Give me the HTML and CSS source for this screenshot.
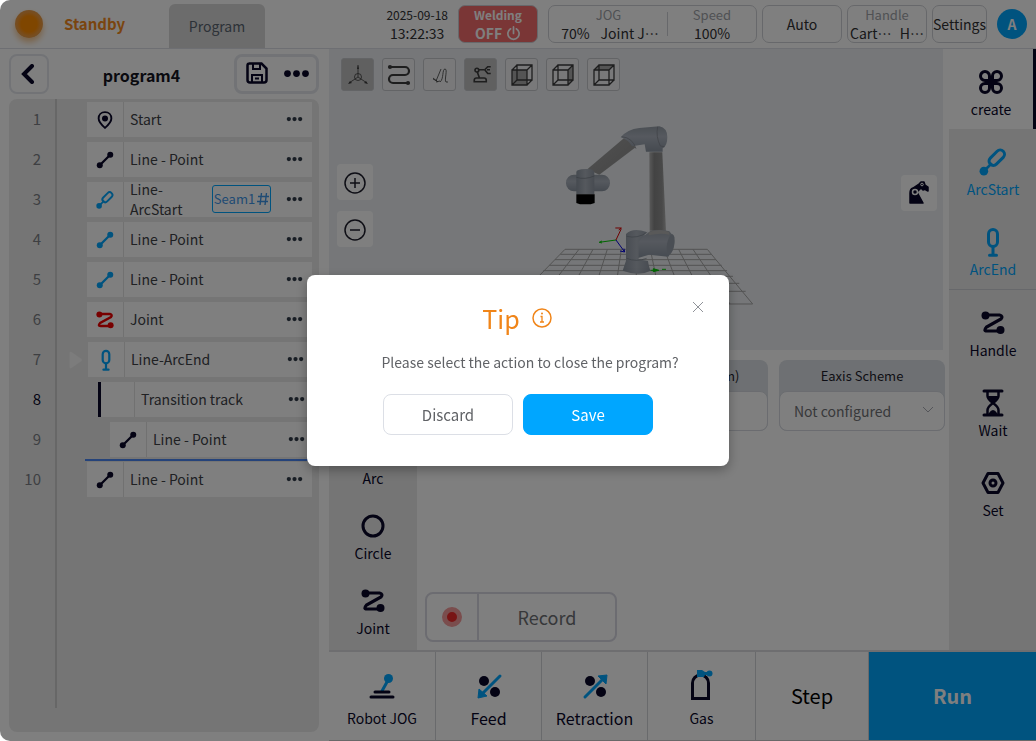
FILE: index.html
```
<!DOCTYPE html>
<html lang="en">

<head>
    <meta charset="UTF-8">
    <meta name="viewport" content="width=device-width, initial-scale=1.0">
    <title>Robot program</title>
    <link rel="stylesheet" href="styles.css">
</head>

<body>
    <!-- shared icons -->
    <svg class="sprite" aria-hidden="true">
        <symbol id="dots" viewBox="0 0 24 8">
            <circle cx="4" cy="4" r="3" /><circle cx="12" cy="4" r="3" /><circle cx="20" cy="4" r="3" />
        </symbol>
        <symbol id="line" viewBox="0 0 24 24">
            <path d="M5 19 19 5" stroke="currentColor" stroke-width="3" />
            <circle cx="5" cy="19" r="4" /><circle cx="19" cy="5" r="4" />
        </symbol>
        <symbol id="joint" viewBox="0 0 24 24">
            <path d="M4 4h14.500q4 1 1.500 4L5.500 16q-3.500 4 .5 4h14" fill="none" stroke="currentColor" stroke-width="3.200" />
            <circle cx="4.500" cy="4.500" r="4" /><circle cx="19.500" cy="19" r="4" />
        </symbol>
        <symbol id="arcstart" viewBox="0 0 26 26">
            <path d="M4 22l8-8" stroke="currentColor" stroke-width="2.500" />
            <rect x="8" y="5" width="17" height="8" rx="4" transform="rotate(-45 16.500 9)" fill="none" stroke="currentColor" stroke-width="2.800" />
            <circle cx="4.500" cy="21.500" r="4" />
        </symbol>
        <symbol id="arcend" viewBox="0 0 26 30">
            <rect x="8.500" y="2.500" width="9" height="17" rx="4.500" fill="none" stroke="currentColor" stroke-width="3" />
            <path d="M13 20v8M9.500 28.200h7" fill="none" stroke="currentColor" stroke-width="3" stroke-linecap="round" />
        </symbol>
        <symbol id="cube" viewBox="0 0 24 24">
            <path d="M2 7h15v15H2zM7 2h15v15H7zM2 7l5-5M17 7l5-5M2 22l5-5M17 22l5-5" fill="none" stroke="currentColor" stroke-width="1.300" />
        </symbol>
        <symbol id="power" viewBox="0 0 16 16">
            <path d="M5 3a6 6 0 1 0 6 0M8 1v7" fill="none" stroke="currentColor" stroke-width="1.800" stroke-linecap="round" />
        </symbol>
    </svg>

    <div class="app">
        <header class="topbar">
            <span class="orb"></span>
            <strong class="status">Standby</strong>
            <a class="tab" href="#program">Program</a>
            <div class="clock"><span class="date">2025-09-18</span><span>13:22:33</span></div>
            <button class="weld">
                <span>Welding</span>
                <span class="weld-state">OFF <svg><use href="#power" /></svg></span>
            </button>
            <div class="box jog">
                <div class="jog-mode"><small>JOG</small><p><span>70%</span><span lang="zh-CN">Joint J…</span></p></div>
                <div class="jog-speed"><small>Speed</small><p>100%</p></div>
            </div>
            <button class="box">Auto</button>
            <button class="box handle"><small>Handle</small><span class="handle-row" lang="zh-CN"><span>Cart…</span><span>H…</span></span></button>
            <button class="box settings">Settings</button>
            <button class="avatar">A</button>
        </header>

        <div class="main">
            <aside class="program" id="program">
                <div class="program-head">
                    <button class="back" aria-label="Back">
                        <svg viewBox="0 0 16 20"><path d="M11 2 3 10l8 8" fill="none" stroke="currentColor" stroke-width="4" stroke-linecap="round" /></svg>
                    </button>
                    <h1>program4</h1>
                    <div class="file-actions">
                        <button aria-label="Save program">
                            <svg class="save-icon" viewBox="0 0 22 22" fill="none" stroke="currentColor" stroke-width="2.500"><path d="M3 1.500h12.500l5 5V18a2.500 2.500 0 0 1-2.500 2.500H4A2.500 2.500 0 0 1 1.500 18V3.500q0-2 2-2z" /><path d="M7 2v5h7V2M6 20v-7h10v7M9 16.500h4" stroke-width="2" /></svg>
                        </button>
                        <button aria-label="More"><svg class="more-icon"><use href="#dots" /></svg></button>
                    </div>
                </div>

                <ol class="steps">
                    <li><span class="num">1</span>
                        <div class="step"><span class="step-icon"><svg viewBox="0 0 24 24"><path d="M12 1.500c5 0 8.500 3.500 8.500 8.500 0 5-4.500 9-8.500 12.500C8 19 3.500 15 3.500 10c0-5 3.500-8.500 8.500-8.500z" fill="none" stroke="currentColor" stroke-width="2.500" /><circle cx="12" cy="10" r="4" /></svg></span><span class="name">Start</span><button aria-label="More"><svg><use href="#dots" /></svg></button></div>
                    </li>
                    <li><span class="num">2</span>
                        <div class="step"><span class="step-icon"><svg><use href="#line" /></svg></span><span class="name">Line - Point</span><button aria-label="More"><svg><use href="#dots" /></svg></button></div>
                    </li>
                    <li><span class="num">3</span>
                        <div class="step"><span class="step-icon blue"><svg><use href="#arcstart" /></svg></span><span class="name">Line-ArcStart</span>
                            <a class="seam" href="#seam1">Seam1<svg viewBox="0 0 12 14"><path d="M4.500 1 3 13M9.500 1 8 13M1 4.500h11M0 9.500h11" fill="none" stroke="currentColor" stroke-width="1.400" /></svg></a>
                            <button aria-label="More"><svg><use href="#dots" /></svg></button></div>
                    </li>
                    <li><span class="num">4</span>
                        <div class="step"><span class="step-icon blue"><svg><use href="#line" /></svg></span><span class="name">Line - Point</span><button aria-label="More"><svg><use href="#dots" /></svg></button></div>
                    </li>
                    <li><span class="num">5</span>
                        <div class="step"><span class="step-icon blue"><svg><use href="#line" /></svg></span><span class="name">Line - Point</span><button aria-label="More"><svg><use href="#dots" /></svg></button></div>
                    </li>
                    <li><span class="num">6</span>
                        <div class="step"><span class="step-icon red"><svg><use href="#joint" /></svg></span><span class="name">Joint</span><button aria-label="More"><svg><use href="#dots" /></svg></button></div>
                    </li>
                    <li class="current"><span class="num">7</span><svg class="pointer" viewBox="0 0 14 18"><path d="M1 2q0-2 2-1l10 7q1 1 0 2L3 17q-2 1-2-1z" /></svg>
                        <div class="step"><span class="step-icon blue tall"><svg><use href="#arcend" /></svg></span><span class="name">Line-ArcEnd</span><button aria-label="More"><svg><use href="#dots" /></svg></button></div>
                    </li>
                    <li class="group"><span class="num">8</span>
                        <div class="step"><span class="step-icon"></span><span class="name">Transition track</span><button aria-label="More"><svg><use href="#dots" /></svg></button></div>
                    </li>
                    <li class="child"><span class="num">9</span>
                        <div class="step"><span class="step-icon"><svg><use href="#line" /></svg></span><span class="name">Line - Point</span><button aria-label="More"><svg><use href="#dots" /></svg></button></div>
                    </li>
                    <li class="insert"><span class="num">10</span>
                        <div class="step"><span class="step-icon"><svg><use href="#line" /></svg></span><span class="name">Line - Point</span><button aria-label="More"><svg><use href="#dots" /></svg></button></div>
                    </li>
                </ol>
            </aside>

            <div class="work">
                <div class="upper">
                    <div class="center">
                        <section class="scene">
                            <svg class="robot" viewBox="0 0 614 300" preserveAspectRatio="xMidYMid slice">
                                <defs>
                                    <linearGradient id="tube" x1="0" x2="1" y1="0" y2="0"><stop offset="0" stop-color="#b4b4b4" /><stop offset=".3" stop-color="#868686" /><stop offset=".75" stop-color="#929292" /><stop offset="1" stop-color="#b4b4b4" /></linearGradient>
                                    <linearGradient id="arm" x1="0" x2="1" y1="0" y2="1"><stop offset="0" stop-color="#a4a4a4" /><stop offset=".6" stop-color="#949494" /><stop offset="1" stop-color="#a8a8a8" /></linearGradient>
                                    <linearGradient id="cap" x1="0" x2="0" y1="0" y2="1"><stop offset="0" stop-color="#959da8" /><stop offset=".4" stop-color="#acb3be" /><stop offset="1" stop-color="#8b94a1" /></linearGradient>
                                    <linearGradient id="body" x1="0" x2="1" y1="0" y2="0"><stop offset="0" stop-color="#8b94a0" /><stop offset=".5" stop-color="#abb2bc" /><stop offset="1" stop-color="#8f97a3" /></linearGradient>
                                </defs>
                                <g transform="translate(201 60) scale(.3333)">
                                    <path d="M105 418h427M91 433h453M75 449h483M58 466h517M40 482h551M20 499h589M0 520h628M-25 544h672M-55 582h723M105 418-55 582M147 418 20 582M189 418 100 582M232 418 180 582M274 418 250 582M318 418 320 582M361 418 395 582M403 418 465 582M446 418 530 582M489 418 600 582M532 418 668 582" fill="none" stroke="#a6a6a6" stroke-width="3" />
                                    <path d="M172 178 285 82l32 30L208 194z" fill="url(#arm)" />
                                    <path d="M272 82q20-24 56-28l60-5q24 5 24 32t-14 34v10h-50l-4-22-38 6q-8-18-34-27z" fill="url(#cap)" />
                                    <path d="M275 80q33 3 43 36M383 50q-6 30 8 58l12 2" fill="none" stroke="#7b8089" stroke-width="2" />
                                    <path d="M358 127h39l11 235h-49z" fill="url(#tube)" />
                                    <rect x="108" y="194" width="132" height="50" rx="24" fill="url(#cap)" />
                                    <path d="M139 186q0-8 27-9t27 10v66h-54z" fill="url(#body)" />
                                    <path d="M139 202q26 8 54-4" fill="none" stroke="#707781" stroke-width="2" />
                                    <path d="M139 253h55v26l-12 4h-32l-11-4z" fill="#000" />
                                    <path d="M322 378q20 4 38-14 27-8 58 0l10 12q10 24-1 46l-12 18-58-6-40 12z" fill="url(#cap)" />
                                    <path d="M356 367q30-14 62-1v8q-28-6-62 2z" fill="#b2b2b2" />
                                    <ellipse cx="422" cy="403" rx="11" ry="31" fill="#959da8" transform="rotate(10 422 403)" />
                                    <path d="M288 372q20-20 62-6l-24 30v52l28 5q3 20 8 29-35 18-84 0l10-30z" fill="url(#body)" />
                                    <path d="M290 445q28 12 60 0M290 379q32 8 62-12" fill="none" stroke="#767e89" stroke-width="2" />
                                    <path d="m258 390-50 7m8-4-8 4 8 2" fill="none" stroke="#0c0" stroke-width="3" />
                                    <path d="m258 390 16-34m-18-2 18 0-8 6" fill="none" stroke="#d00" stroke-width="3" />
                                    <path d="m258 390 26 36m-14-3 14 3-2-10" fill="none" stroke="#00d" stroke-width="3" />
                                    <path d="M362 481h24m10-3h12M370 476l16 5-16 4z" fill="#0c0" stroke="#0c0" stroke-width="3" />
                                </g>
                            </svg>

                            <div class="view-tools">
                                <button class="on" aria-label="Axes"><svg viewBox="0 0 24 24" fill="none" stroke="currentColor" stroke-width=".8"><path d="M12 2v12M12 14 3 20M12 14l9 6" /><circle cx="12" cy="14" r="3.500" /><path d="m11 6 1-4 1 4zM4 18l-2 3 4-1zM20 18l2 3-4-1z" fill="currentColor" stroke="none" /></svg></button>
                                <button aria-label="Track"><svg viewBox="0 0 24 24" fill="none" stroke="currentColor" stroke-width="2.200"><path d="M3 4h15a4 4 0 0 1 0 8H6a4 4 0 0 0 0 8h15" /><circle cx="3" cy="4" r="1" /><circle cx="21" cy="20" r="1" /></svg></button>
                                <button aria-label="Path"><svg viewBox="0 0 24 24" fill="none" stroke="currentColor" stroke-width=".8"><path d="m5 15 5 4M8 18l5-12M5 16l4 2M8 19l4-1M12 19c4-3 2-13 5-13 3 0-1 11 1 13h2" /></svg></button>
                                <button class="on" aria-label="Robot"><svg viewBox="0 0 32 32" fill="none" stroke="currentColor" stroke-width="2.200"><path d="M7 25v-2q0-3 3-3h10q3 0 3 3v2zM14 20l-3-8M13 9h7M29 5h-4l-4 4 4 5h4M24 9h4" /><circle cx="10.500" cy="9.500" r="2.500" /></svg></button>
                                <button aria-label="Front view"><svg><path class="face" d="M2 7h15v15H2z" /><use href="#cube" /></svg></button>
                                <button aria-label="Side view"><svg><path class="face" d="M17 7l5-5v15l-5 5z" /><use href="#cube" /></svg></button>
                                <button aria-label="Top view"><svg><path class="face" d="M2 7l5-5h15l-5 5z" /><use href="#cube" /></svg></button>
                            </div>
                            <div class="zoom-tools">
                                <button aria-label="Zoom in"><svg viewBox="0 0 24 24"><circle cx="12" cy="12" r="10" /><path d="M7 12h10M12 7v10" /></svg></button>
                                <button aria-label="Zoom out"><svg viewBox="0 0 24 24"><circle cx="12" cy="12" r="10" /><path d="M7 12h10" /></svg></button>
                            </div>
                            <button class="pose" aria-label="Robot pose"><svg viewBox="0 0 24 26"><path d="M3 23V13q0-4 3-5l6-4 2-2h3l1 3 3 2v4l-2-1v-1l-3 1-2-2-4 4 6 11z" fill="currentColor" stroke="currentColor" stroke-width="1.500" stroke-linejoin="round" /><circle cx="8" cy="12" r="2.500" fill="currentColor" stroke="#fff" stroke-width="1.500" /><circle cx="15" cy="4.500" r="1.300" fill="currentColor" stroke="#fff" /></svg></button>
                        </section>

                        <section class="editor">
                            <nav class="moves">
                                <button class="tool"><svg><use href="#line" /></svg>Line</button>
                                <button class="tool"><svg viewBox="0 0 24 24"><path d="M4 20Q4 4 20 4" fill="none" stroke="currentColor" stroke-width="3" /><circle cx="4" cy="20" r="3" /><circle cx="20" cy="4" r="3" /></svg>Arc</button>
                                <button class="tool"><svg viewBox="0 0 24 24"><circle cx="12" cy="12" r="10" fill="none" stroke="currentColor" stroke-width="3" /></svg>Circle</button>
                                <button class="tool"><svg><use href="#joint" /></svg>Joint</button>
                            </nav>
                            <div class="settings-area">
                                <div class="fields">
                                    <div class="field"><label for="speed">Speed</label><input id="speed" type="text"></div>
                                    <div class="field"><label for="radius">Blend radius(mm)</label><input id="radius" type="text"></div>
                                    <div class="field select"><label for="eaxis">Eaxis Scheme</label>
                                        <select id="eaxis"><option>Not configured</option></select>
                                        <svg viewBox="0 0 12 8"><path d="m1 1 5 5 5-5" fill="none" stroke="currentColor" /></svg>
                                    </div>
                                </div>
                                <button class="record"><span class="record-dot"><i></i></span><span class="record-text">Record</span></button>
                            </div>
                        </section>
                    </div>

                    <nav class="sidebar">
                        <button class="tool active"><svg viewBox="0 0 24 24" fill="none" stroke="currentColor" stroke-width="3"><path d="M10.500 10.500H6A4.500 4.500 0 1 1 10.500 6zM13.500 10.500V6a4.500 4.500 0 1 1 4.500 4.500zM10.500 13.500V18A4.500 4.500 0 1 1 6 13.500zM13.500 13.500H18a4.500 4.500 0 1 1-4.500 4.500z" /></svg>create</button>
                        <button class="tool blue"><svg><use href="#arcstart" /></svg>ArcStart</button>
                        <button class="tool blue tall last"><svg><use href="#arcend" /></svg>ArcEnd</button>
                        <button class="tool"><svg><use href="#joint" /></svg>Handle</button>
                        <button class="tool wait"><svg viewBox="0 0 24 28"><path d="M3 2h18M3 26h18" stroke="currentColor" stroke-width="3" stroke-linecap="round" /><path d="M6.500 2v5q0 3 5.500 7-5.500 4-5.500 7v5M17.500 2v5q0 3-5.500 7 5.500 4 5.500 7v5" fill="none" stroke="currentColor" stroke-width="2.500" /><path d="M6 7h12l-6 7zM8 25v-1q4-6 8 0v1z" /></svg>Wait</button>
                        <button class="tool"><svg viewBox="0 0 24 24" fill="none" stroke="currentColor" stroke-width="3" stroke-linejoin="round"><path d="M7 2.500h10l5 9.500-5 9.500H7L2 12z" /><circle cx="12" cy="12" r="3" /></svg>Set</button>
                    </nav>
                </div>

                <footer class="controls">
                    <button class="tool"><svg viewBox="0 0 28 28" fill="none" stroke-linecap="round"><path d="m14 19 5-9" stroke="#00a6ff" stroke-width="3" /><circle cx="20.500" cy="6.500" r="4.500" fill="#00a6ff" /><path d="M7 20h14M3 25h22" stroke="currentColor" stroke-width="3" /></svg>Robot JOG</button>
                    <button class="tool big"><svg viewBox="0 0 28 28"><circle cx="9" cy="9" r="5" /><circle cx="20" cy="20" r="5" /><path d="M25 4 7 22" stroke="#00a6ff" stroke-width="3" stroke-linecap="round" /><path d="m4 17 8 7-9 2z" fill="#00a6ff" stroke="#00a6ff" /></svg>Feed</button>
                    <button class="tool big"><svg viewBox="0 0 28 28"><circle cx="9" cy="9" r="5" /><circle cx="20" cy="20" r="5" /><path d="M4 25 22 7" stroke="#00a6ff" stroke-width="3" stroke-linecap="round" /><path d="m17 4 9-1-1 9z" fill="#00a6ff" stroke="#00a6ff" /></svg>Retraction</button>
                    <button class="tool gas"><svg viewBox="0 0 28 32"><path d="M4.500 30.500V15a8 8 0 0 1 16 0v15.500z" fill="none" stroke="currentColor" stroke-width="3" /><path d="M9 2h5l3 2h4v3h-4l-1 2H9z" fill="#00a6ff" /><circle cx="21.500" cy="5.500" r="3" fill="#00a6ff" /></svg>Gas</button>
                    <button class="step-btn">Step</button>
                    <button class="run">Run</button>
                </footer>
            </div>
        </div>
    </div>

    <div class="overlay">
        <div class="dialog" role="dialog" aria-labelledby="dialog-title">
            <button class="close" aria-label="Close"><svg viewBox="0 0 12 12"><path d="m1 1 10 10M11 1 1 11" stroke="currentColor" /></svg></button>
            <h2 id="dialog-title">Tip <svg viewBox="0 0 20 20"><circle cx="10" cy="10" r="9" fill="none" stroke="currentColor" stroke-width="1.500" /><path d="M8.500 8.500H10V14M8 14h4" fill="none" stroke="currentColor" stroke-width="1.300" /><circle cx="10" cy="5.500" r="1" fill="currentColor" /></svg></h2>
            <p>Please select the action to close the program?</p>
            <div class="dialog-actions">
                <button>Discard</button>
                <button class="primary">Save</button>
            </div>
        </div>
    </div>
</body>

</html>
```
FILE: styles.css
```
* {
    box-sizing: border-box;
}

body {
    margin: 0;
    font-family: "Noto Sans CJK SC", "Noto Sans", sans-serif;
    font-size: 14px;
    line-height: 20px;
    color: #303133;
}

button,
input,
select {
    font: inherit;
    color: inherit;
    margin: 0;
    padding: 0;
    border: 0;
    background: none;
}

a {
    text-decoration: none;
}

p,
h1,
h2 {
    margin: 0;
}

small {
    display: block;
    font-size: 13px;
    line-height: 18px;
    color: #a0a3a8;
}

svg {
    display: block;
}

svg:not([fill]) {
    fill: currentColor;
}

.sprite {
    position: absolute;
    width: 0;
    height: 0;
}

.blue {
    color: #00a6ff;
}

.red {
    color: #f00000;
}

.app {
    display: flex;
    flex-direction: column;
    min-height: 100vh;
    background: #fff;
}

/* top bar */
.topbar {
    display: flex;
    align-items: center;
    height: 49px;
    padding: 0 9px 0 15px;
    border-bottom: 1px solid #dcdfe6;
}

.orb {
    width: 28px;
    height: 28px;
    border-radius: 50%;
    background: radial-gradient(circle, #ff8c00 40%, #f09a3c 60%, #d8a468);
    box-shadow: 0 4px 6px #f5c48c;
}

.status {
    width: 61px;
    margin-left: 21px;
    padding-bottom: 0;
    font-size: 15px;
    color: #f58a1e;
}

.tab {
    align-self: flex-end;
    width: 96px;
    height: 44px;
    margin-left: 44px;
    border-radius: 6px 6px 0 0;
    background: #d8d8d8;
    color: #5a6570;
    line-height: 44px;
    text-align: center;
}

.clock {
    display: flex;
    flex-direction: column;
    margin-left: auto;
    margin-right: 10px;
    text-align: center;
    line-height: 18px;
}

.date {
    font-size: 12px;
}

.box,
.weld {
    width: 80px;
    height: 38px;
    margin-right: 5px;
    border: 1px solid #cfd1d6;
    border-radius: 7px;
    white-space: nowrap;
}

.weld {
    margin-right: 10px;
    background: #f56c6c;
    color: #fff;
    font-size: 12px;
    font-weight: bold;
    line-height: 18px;
}

.weld-state {
    display: flex;
    align-items: center;
    justify-content: center;
    gap: 4px;
    font-size: 14px;
}

.weld-state svg {
    width: 15px;
    height: 15px;
}

.jog {
    display: flex;
    align-items: center;
    width: 209px;
    text-align: center;
    line-height: 18px;
}

.jog-mode {
    width: 119px;
    background: linear-gradient(#cfd1d6, #cfd1d6) right center / 1px 24px no-repeat;
}

.jog-mode p {
    display: flex;
    justify-content: center;
    gap: 11px;
    padding-left: 3px;
}

.jog-speed {
    flex: 1;
}

.handle {
    line-height: 18px;
}

.handle-row {
    display: flex;
    justify-content: space-between;
    padding: 0 2px;
}

.settings {
    display: flex;
    align-items: center;
    justify-content: center;
    width: 55px;
    margin-right: 10px;
}

.avatar {
    width: 30px;
    height: 30px;
    border-radius: 50%;
    background: #00a6ff;
    color: #fff;
    font-size: 14px;
    font-weight: bold;
}

.main {
    display: flex;
    flex: 1;
}

/* program list */
.program {
    display: flex;
    flex-direction: column;
    width: 329px;
    flex-shrink: 0;
    padding: 5px 10px 9px 9px;
}

.program-head {
    display: flex;
    align-items: center;
    justify-content: space-between;
    margin-bottom: 5px;
    color: #080628;
}

.program-head h1 {
    flex: 1;
    padding-top: 2px;
    font-size: 16px;
    text-align: center;
    color: #15151f;
}

.back {
    display: grid;
    place-items: center;
    width: 40px;
    height: 40px;
    border: 2px solid #e4e7ed;
    border-radius: 8px;
}

.back svg {
    width: 16px;
    height: 20px;
}

.file-actions {
    display: flex;
    align-items: center;
    justify-content: center;
    gap: 15px;
    width: 85px;
    height: 40px;
    padding: 0 0 2px 2px;
    border: 3px solid #e4e7ed;
    border-radius: 8px;
}

.save-icon {
    width: 22px;
    height: 22px;
}

.more-icon {
    width: 27px;
    height: 9px;
}

.steps {
    position: relative;
    flex: 1;
    margin: 0;
    padding: 3px 7px 0 0;
    border-radius: 8px;
    background: #ebebeb;
    list-style: none;
}

.steps::before {
    content: "";
    position: absolute;
    left: 46px;
    top: 0;
    bottom: 24px;
    width: 2px;
    background: #cfcfcf;
}

.steps li {
    position: relative;
    display: flex;
    align-items: center;
    margin-bottom: 5px;
}

.num {
    width: 32px;
    margin-right: 46px;
    padding-bottom: 1px;
    text-align: right;
    font-size: 15px;
    color: #7c7f85;
}

.step {
    display: flex;
    align-items: center;
    flex: 1;
    height: 35px;
    padding-bottom: 1px;
    background: #fff;
}

.step-icon {
    display: grid;
    place-items: center;
    align-self: flex-start;
    width: 37px;
    height: 35px;
    border-right: 1px solid #e2e2e2;
}

.step-icon:not(.blue):not(.red) {
    color: #080628;
}

.step-icon svg {
    width: 18px;
    height: 18px;
}

.step-icon.tall svg {
    width: 20px;
    height: 22px;
}

.name {
    flex: 1;
    padding-left: 6px;
    color: #404247;
}

.step button {
    width: 36px;
    color: #303a48;
}

.step button svg {
    width: 17px;
    height: 6px;
    margin: 0 auto;
}

.seam {
    display: flex;
    align-items: center;
    justify-content: center;
    gap: 2px;
    width: 59px;
    height: 28px;
    margin-right: 5px;
    border: 1px solid #00a6ff;
    border-radius: 3px;
    color: #3f96e8;
    font-size: 13px;
}

.seam svg {
    width: 12px;
    height: 14px;
}

.pointer {
    position: absolute;
    left: 59px;
    width: 15px;
    height: 18px;
    color: #f8f8f8;
}

.current .num {
    margin-right: 47px;
}

.group .num {
    margin-right: 57px;
    color: #080628;
}

.group .step-icon {
    border-left: 3px solid #080628;
}

.child .num {
    margin-right: 69px;
}

.current .step {
    margin-right: -1px;
}

.group .step,
.child .step {
    margin-right: -2px;
}

/* drop position of the dragged step */
.insert::before {
    content: "";
    position: absolute;
    left: 76px;
    right: 0;
    top: -3px;
    height: 2px;
    background: #4a86f5;
}

/* work area */
.work {
    display: flex;
    flex-direction: column;
    flex: 1;
    min-width: 0;
}

.upper {
    display: flex;
    flex: 1;
}

.center {
    display: flex;
    flex-direction: column;
    flex: 1;
    min-width: 0;
}

.scene {
    position: relative;
    height: 301px;
    margin-right: 6px;
    padding: 9px 8px 0;
    background: #eceff2;
}

.robot {
    position: absolute;
    left: 0;
    top: 1px;
    width: 100%;
    height: 300px;
}

.view-tools {
    position: relative;
    display: flex;
    gap: 8px;
    margin-left: 4px;
}

.view-tools button {
    display: grid;
    place-items: center;
    width: 33px;
    height: 33px;
    border: 1px solid #c6c8cc;
    border-radius: 3px;
    background: #f2f3f5;
    color: #3c3c3c;
}

.view-tools .on {
    background: #c0c0c0;
}

.view-tools svg {
    width: 24px;
    height: 24px;
}

.face {
    fill: #a8a8a8;
}

.zoom-tools {
    position: relative;
    display: flex;
    flex-direction: column;
    gap: 11px;
    width: 36px;
    margin-top: 73px;
}

.zoom-tools button,
.pose {
    display: grid;
    place-items: center;
    width: 36px;
    height: 36px;
    border-radius: 4px;
    background: #fff;
    color: #1d1d2b;
}

.zoom-tools button {
    padding-top: 1px;
}

.zoom-tools svg {
    width: 24px;
    height: 24px;
    stroke: currentColor;
    stroke-width: 1.5;
}

.zoom-tools circle {
    fill: none;
}

.pose {
    position: absolute;
    right: 6px;
    top: 126px;
    color: #080628;
}

.pose svg {
    width: 24px;
    height: 26px;
}

.editor {
    display: flex;
    flex: 1;
}

.tool {
    display: flex;
    flex-direction: column;
    align-items: center;
    color: #080628;
}

.tool.blue {
    color: #00a6ff;
}

.tool svg {
    width: 24px;
    height: 24px;
}

.moves {
    width: 88px;
    background: #ebebeb;
}

.moves .tool {
    width: 100%;
    height: 75px;
    padding-top: 14px;
    gap: 5px;
}

.settings-area {
    display: flex;
    flex-direction: column;
    justify-content: space-between;
    align-items: flex-start;
    flex: 1;
    padding: 10px 4px 8px 8px;
}

.fields {
    display: flex;
    gap: 11px;
    width: 100%;
}

.field {
    position: relative;
    flex: 1;
    min-width: 0;
    border-radius: 8px;
    background: #dce1e6;
}

.field label {
    display: block;
    font-size: 13px;
    line-height: 31px;
    text-align: center;
    color: #1d1d2b;
}

.field input,
.field select {
    display: block;
    width: 100%;
    height: 40px;
    padding: 0 14px;
    border: 1px solid #d6d9e0;
    border-radius: 8px;
    background: #fff;
    color: #707276;
    appearance: none;
}

.field svg {
    position: absolute;
    right: 11px;
    bottom: 17px;
    width: 12px;
    height: 8px;
    color: #a8abb2;
}

.record {
    display: flex;
    width: 192px;
    height: 50px;
    border: 2px solid #d8d8e2;
    border-radius: 8px;
    font-size: 18px;
    line-height: 46px;
    color: #6e7074;
}

.record-dot {
    display: grid;
    place-items: center;
    width: 52px;
    height: 46px;
    border-right: 2px solid #d8d8e2;
}

.record-dot i {
    width: 20px;
    height: 20px;
    border: 5px solid #f59a9a;
    border-radius: 50%;
    background: #f02828;
}

.record-text {
    flex: 1;
}

/* right side */
.sidebar {
    width: 87px;
    background: #ebebeb;
}

.sidebar .tool {
    width: 100%;
    height: 80px;
    padding-top: 21px;
    padding-left: 1px;
    gap: 5px;
}

.sidebar .tool.active {
    padding-left: 0;
    border-right: 3px solid #080628;
    background: #fff;
}

.sidebar .blue svg {
    width: 28px;
    height: 28px;
    margin: -2px 0;
}

.sidebar .tall svg {
    height: 30px;
    margin: -3px 0;
}

.sidebar .wait svg {
    height: 28px;
    margin: -2px 0;
}

.sidebar .last {
    height: 81px;
    border-bottom: 1px solid #cfd1d6;
}

/* bottom bar */
.controls {
    display: flex;
    height: 91px;
    border-top: 2px solid #dcdde0;
    border-bottom: 1px solid #d0d0d0;
}

.controls button {
    height: 88px;
    width: 106px;
    border-right: 1px solid #d2d4d8;
}

.controls button:first-child {
    width: 107px;
}

.controls .tool {
    padding-top: 20px;
    gap: 8px;
}

.controls .tool svg {
    width: 28px;
    height: 28px;
}

.controls .big {
    font-size: 16px;
}

.controls .gas {
    width: 108px;
}

.controls .gas svg {
    height: 32px;
    margin-top: -4px;
}

.controls .step-btn {
    width: 113px;
    font-size: 20px;
    color: #000;
}

.controls .run {
    flex: 1;
    border: 0;
    background: #00a6ff;
    color: #fff;
    font-size: 20px;
    font-weight: bold;
}

/* close program dialog */
.overlay {
    position: fixed;
    inset: 0;
    display: flex;
    align-items: center;
    justify-content: center;
    border-radius: 10px 0 0 10px;
    background: rgba(0, 0, 0, .5);
    box-shadow: 0 0 0 10px #fff;
}

.dialog {
    position: relative;
    width: 422px;
    padding: 29px 30px 31px;
    border-radius: 8px;
    background: #fff;
    box-shadow: 0 4px 12px rgba(0, 0, 0, .3);
    text-align: center;
    color: #606266;
}

.dialog h2 {
    display: flex;
    align-items: center;
    justify-content: center;
    gap: 12px;
    margin-bottom: 20px;
    padding-right: 2px;
    font-size: 25px;
    font-weight: normal;
    line-height: 28px;
    color: #f08519;
}

.dialog h2 svg {
    width: 20px;
    height: 20px;
}

.dialog p {
    padding-left: 24px;
}

.dialog-actions {
    display: flex;
    justify-content: center;
    gap: 10px;
    margin-top: 22px;
}

.dialog-actions button {
    width: 130px;
    height: 41px;
    border: 1px solid #dcdfe6;
    border-radius: 8px;
    font-size: 15px;
}

.dialog-actions .primary {
    border-color: #00a6ff;
    background: #00a6ff;
    color: #fff;
}

.close {
    position: absolute;
    right: 25px;
    top: 26px;
    color: #909399;
}

.close svg {
    width: 12px;
    height: 12px;
}
```
